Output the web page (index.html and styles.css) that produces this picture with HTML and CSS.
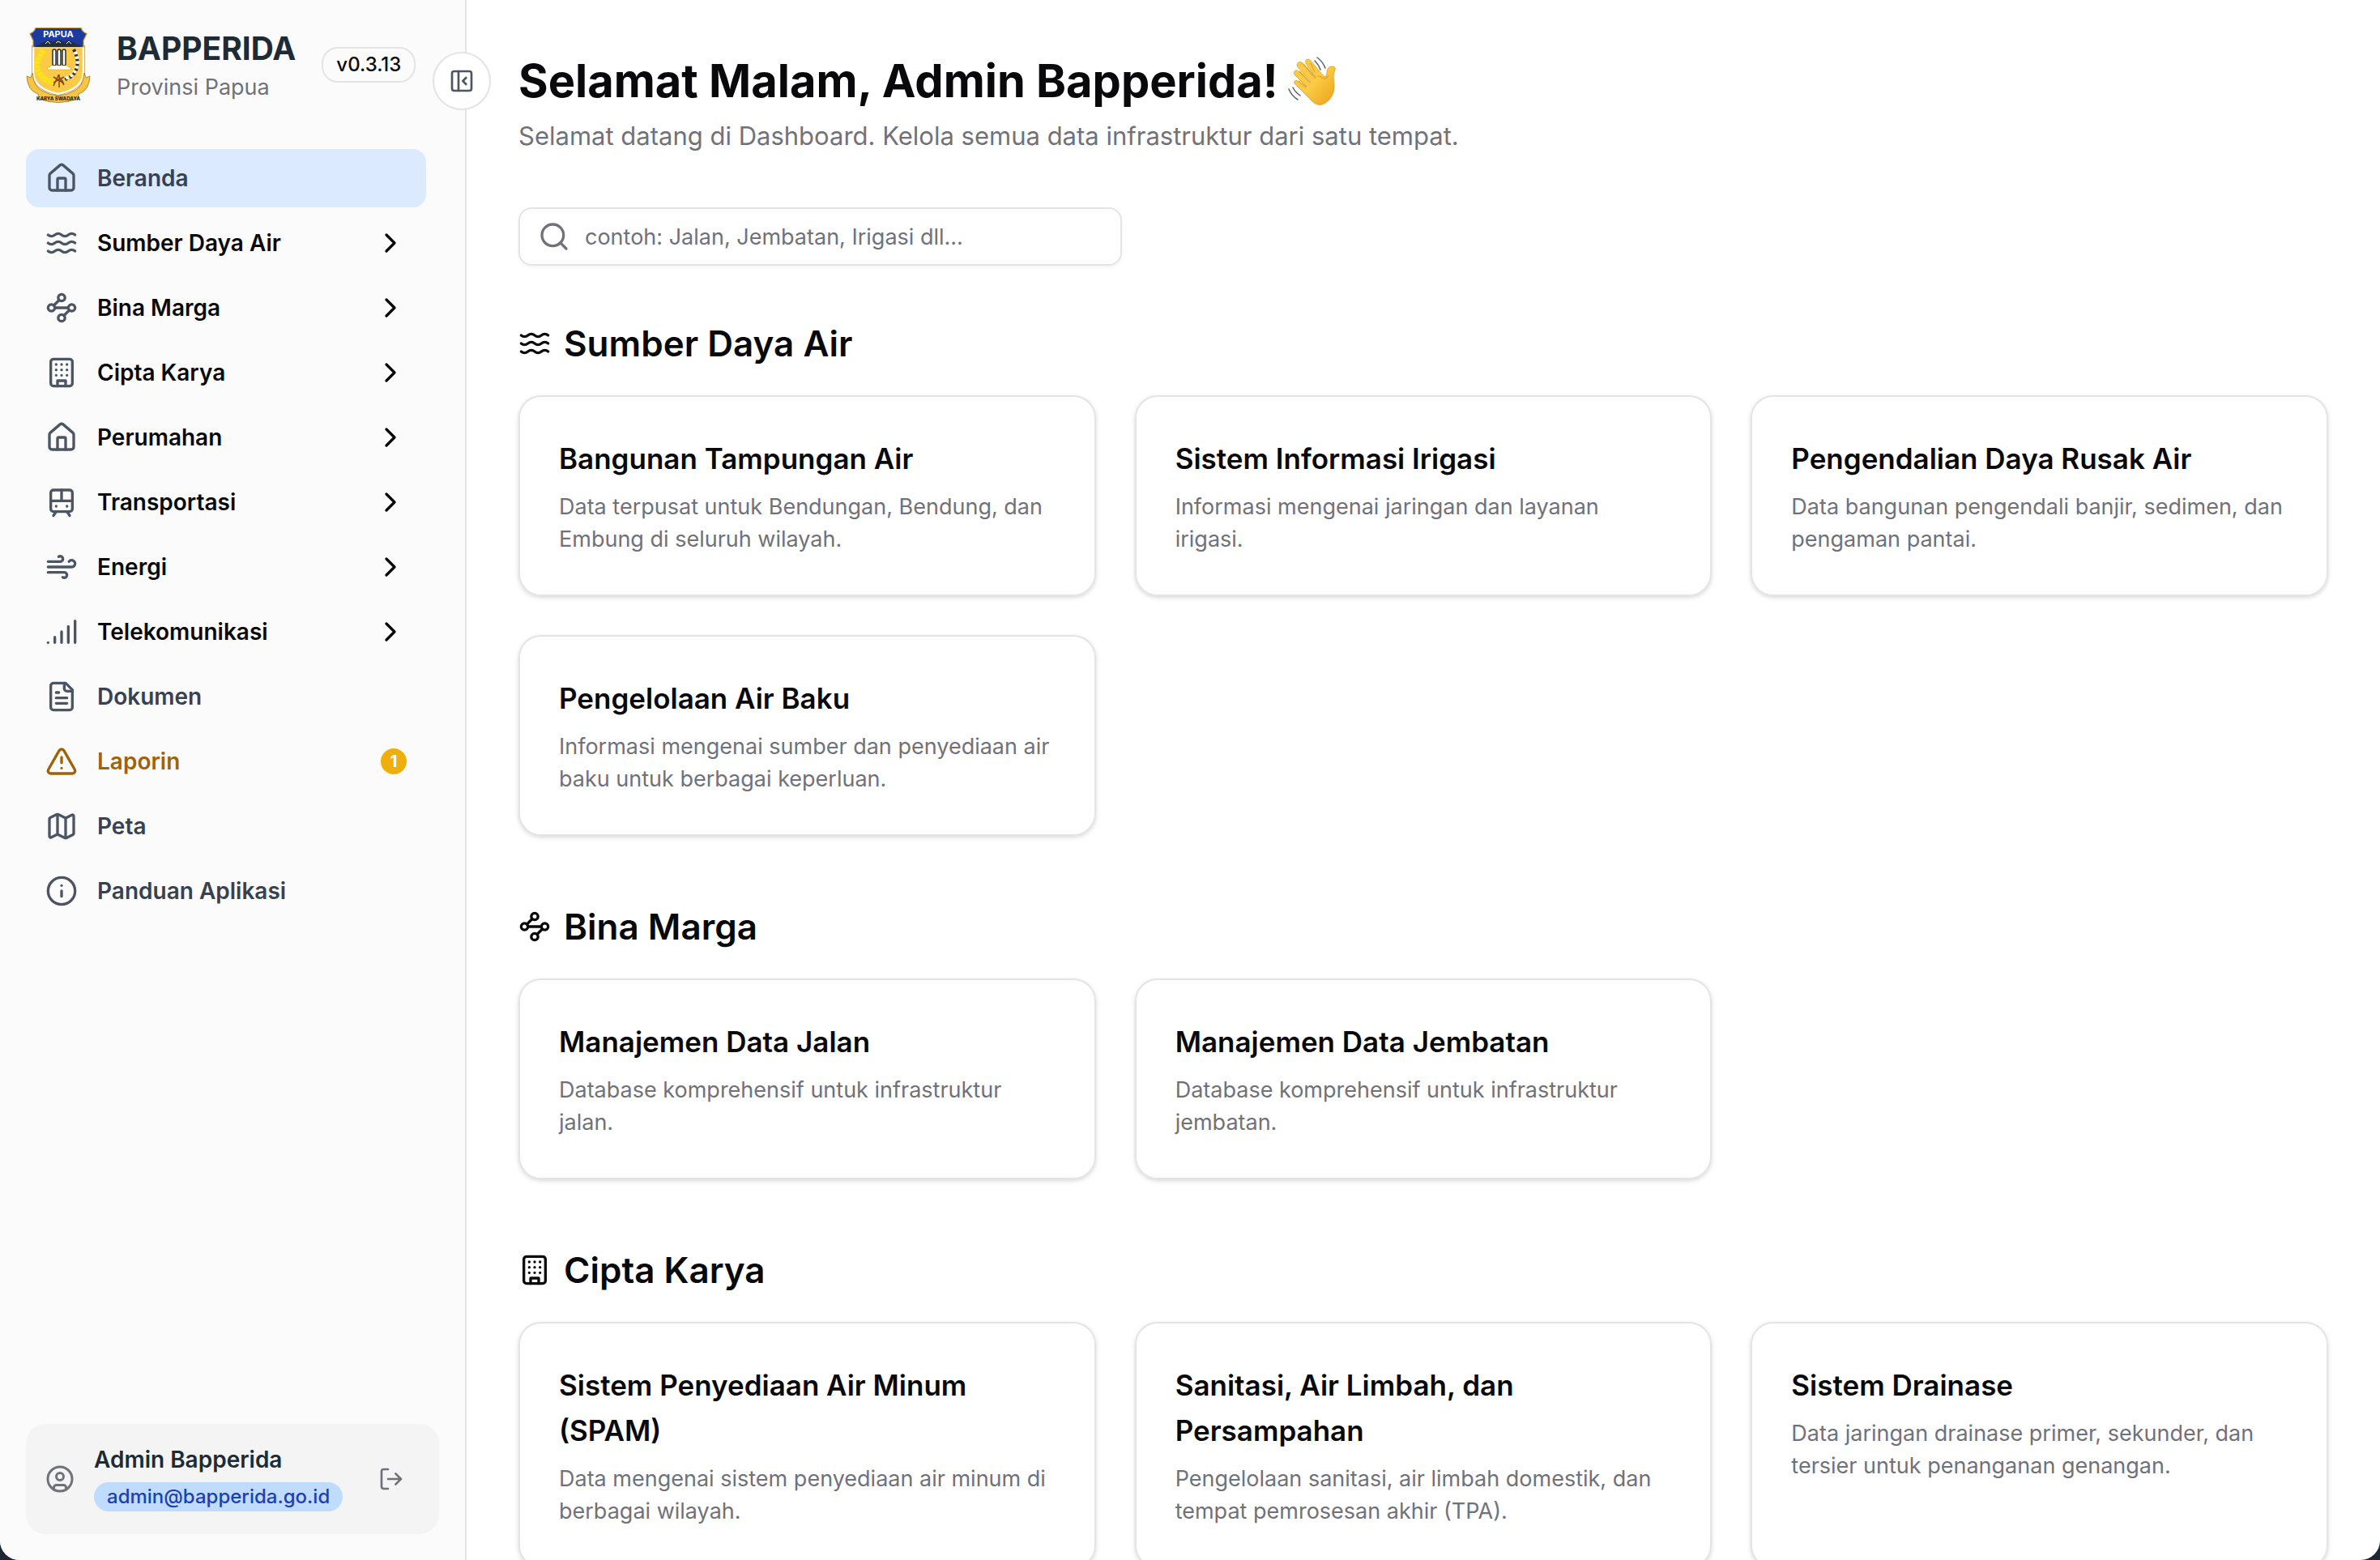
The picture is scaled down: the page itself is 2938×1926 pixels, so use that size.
FILE: index.html
```html
<!DOCTYPE html>
<html lang="id">
<head>
    <meta charset="UTF-8">
    <meta name="viewport" content="width=device-width, initial-scale=1.0">
    <title>Bapperida - Provinsi Papua</title>

    <link rel="stylesheet" href="styles.css">
</head>
<body>

    <!-- Icons -->
    <svg class="sprite" aria-hidden="true">
        <symbol id="house" viewBox="0 0 24 24"><path d="M15 21v-8a1 1 0 0 0-1-1h-4a1 1 0 0 0-1 1v8"/><path d="M3 10a2 2 0 0 1 .709-1.528l7-5.999a2 2 0 0 1 2.582 0l7 5.999A2 2 0 0 1 21 10v9a2 2 0 0 1-2 2H5a2 2 0 0 1-2-2z"/></symbol>
        <symbol id="waves" viewBox="0 0 24 24"><path d="M2 6c.6.5 1.2 1 2.5 1C7 7 7 5 9.5 5c2.6 0 2.4 2 5 2 2.5 0 2.5-2 5-2 1.3 0 1.9.5 2.5 1"/><path d="M2 12c.6.5 1.2 1 2.5 1 2.5 0 2.5-2 5-2 2.6 0 2.4 2 5 2 2.5 0 2.5-2 5-2 1.3 0 1.9.5 2.5 1"/><path d="M2 18c.6.5 1.2 1 2.5 1 2.5 0 2.5-2 5-2 2.6 0 2.4 2 5 2 2.5 0 2.5-2 5-2 1.3 0 1.9.5 2.5 1"/></symbol>
        <symbol id="waypoints" viewBox="0 0 24 24"><circle cx="12" cy="4.5" r="2.5"/><path d="m10.2 6.3-3.9 3.9"/><circle cx="4.5" cy="12" r="2.5"/><path d="M7 12h10"/><circle cx="19.5" cy="12" r="2.5"/><path d="m13.8 17.7 3.9-3.9"/><circle cx="12" cy="19.5" r="2.5"/></symbol>
        <symbol id="building" viewBox="0 0 24 24"><rect width="16" height="20" x="4" y="2" rx="2"/><path d="M9 22v-4h6v4M8 6h.01M16 6h.01M12 6h.01M12 10h.01M12 14h.01M16 10h.01M16 14h.01M8 10h.01M8 14h.01"/></symbol>
        <symbol id="tram" viewBox="0 0 24 24"><rect width="16" height="16" x="4" y="3" rx="2"/><path d="M4 11h16M12 3v8M8 19l-2 3M18 22l-2-3M8 15h.01M16 15h.01"/></symbol>
        <symbol id="wind" viewBox="0 0 24 24"><path d="M12.8 19.6A2 2 0 1 0 14 16H2"/><path d="M17.5 8a2.5 2.5 0 1 1 2 4H2"/><path d="M9.8 4.4A2 2 0 1 1 11 8H2"/></symbol>
        <symbol id="signal" viewBox="0 0 24 24"><path d="M2 20h.01M7 20v-4M12 20v-8M17 20V8M22 4v16"/></symbol>
        <symbol id="file" viewBox="0 0 24 24"><path d="M15 2H6a2 2 0 0 0-2 2v16a2 2 0 0 0 2 2h12a2 2 0 0 0 2-2V7Z"/><path d="M14 2v4a2 2 0 0 0 2 2h4M10 9H8M16 13H8M16 17H8"/></symbol>
        <symbol id="alert" viewBox="0 0 24 24"><path d="m21.73 18-8-14a2 2 0 0 0-3.48 0l-8 14A2 2 0 0 0 4 21h16a2 2 0 0 0 1.73-3"/><path d="M12 9v4M12 17h.01"/></symbol>
        <symbol id="map" viewBox="0 0 24 24"><path d="M14.106 5.553a2 2 0 0 0 1.788 0l3.659-1.83A1 1 0 0 1 21 4.619v12.764a1 1 0 0 1-.553.894l-4.553 2.277a2 2 0 0 1-1.788 0l-4.212-2.106a2 2 0 0 0-1.788 0l-3.659 1.83A1 1 0 0 1 3 19.381V6.618a1 1 0 0 1 .553-.894l4.553-2.277a2 2 0 0 1 1.788 0z"/><path d="M15 5.764v15M9 3.236v15"/></symbol>
        <symbol id="info" viewBox="0 0 24 24"><circle cx="12" cy="12" r="10"/><path d="M12 16v-4M12 8h.01"/></symbol>
        <symbol id="chevron" viewBox="0 0 24 24"><path d="m9 18 6-6-6-6"/></symbol>
        <symbol id="panel" viewBox="0 0 24 24"><rect width="18" height="18" x="3" y="3" rx="2"/><path d="M9 3v18M16 15l-3-3 3-3"/></symbol>
        <symbol id="user" viewBox="0 0 24 24"><circle cx="12" cy="12" r="10"/><circle cx="12" cy="10" r="3"/><path d="M7 20.662V19a2 2 0 0 1 2-2h6a2 2 0 0 1 2 2v1.662"/></symbol>
        <symbol id="logout" viewBox="0 0 24 24"><path d="m16 17 5-5-5-5M21 12H9M9 21H5a2 2 0 0 1-2-2V5a2 2 0 0 1 2-2h4"/></symbol>
        <symbol id="search" viewBox="0 0 24 24"><circle cx="11" cy="11" r="8"/><path d="m21 21-4.3-4.3"/></symbol>
    </svg>

    <div class="app">

        <!-- Sidebar -->
        <aside class="sidebar">
            <div class="brand">
                <svg class="logo" viewBox="0 0 80 96" role="img" aria-label="Logo Provinsi Papua">
                    <path d="M9 26V58Q10 78 40 84 70 78 71 58V26z" fill="#fcca46" stroke="#c9962b" stroke-width="4"/>
                    <path d="M9 26V58Q10 78 40 84 70 78 71 58V26z" fill="#fcca46" stroke="#fff" stroke-width="2.500"/>
                    <path d="M1 62 6 64 8 58Q10 76 20 80 40 92 60 80 70 76 72 58L74 64 79 62Q78 80 65 84L64 90Q40 99 16 90L15 84Q2 80 1 62z" fill="#f8c540" stroke="#9a7420" stroke-width=".8"/>
                    <path d="M12 2.500H68Q70 8 75 9.500 72 16 71 18V26H9V18Q8 16 5 9.500 10 8 12 2.500z" fill="#1d3a9e" stroke="#c9962b" stroke-width="1.200"/>
                    <path d="M10 26 22 20 27 18 33 20 40 17 47 20 53 18 58 20 70 26z" fill="#22303c"/>
                    <path d="m24 22 3-3 3 3m7-1 3-2 3 2m7 1 3-3 3 3" fill="none" stroke="#fff" stroke-width="1"/>
                    <text class="logo-name" x="40" y="14">PAPUA</text>
                    <path d="M22 30Q8 48 18 60q6 9 16 9" fill="none" stroke="#f7e516" stroke-width="7" stroke-dasharray="4 1"/>
                    <g stroke="#22303c" stroke-width="1.500" fill="#fff"><rect x="33" y="29" width="4" height="20" rx="2"/><rect x="39" y="29" width="4" height="20" rx="2"/><rect x="45" y="29" width="4" height="20" rx="2"/></g>
                    <path d="M30 49h22v2h3v3H27v-3h3z" fill="#fff" stroke="#c9962b" stroke-width=".5"/>
                    <path d="M59 29q10 20-2 33l-12 6" fill="none" stroke="#22303c" stroke-width="4" stroke-dasharray="3 3"/>
                    <path d="M61 32q7 18-5 29l-9 5" fill="none" stroke="#fff" stroke-width="4" stroke-dasharray="3 3"/>
                    <path d="m34 74 6-13 7 12m-6-13v16m-7-13 13 8m0-8-13 7" fill="none" stroke="#8a4a16" stroke-width="1.500"/>
                    <text class="logo-motto" x="40" y="92">KARYA SWADAYA</text>
                </svg>
                <div class="brand-text">
                    <div class="brand-name">BAPPERIDA</div>
                    <div class="brand-sub">Provinsi Papua</div>
                </div>
                <span class="version">v0.3.13</span>
            </div>
            <button class="toggle" aria-label="Tutup sidebar"><svg class="icon icon-sm"><use href="#panel"/></svg></button>

            <nav class="menu">
                <a class="menu-item active" href="#"><svg class="icon"><use href="#house"/></svg>Beranda</a>
                <button class="menu-item"><svg class="icon"><use href="#waves"/></svg>Sumber Daya Air<svg class="icon chevron"><use href="#chevron"/></svg></button>
                <button class="menu-item"><svg class="icon"><use href="#waypoints"/></svg>Bina Marga<svg class="icon chevron"><use href="#chevron"/></svg></button>
                <button class="menu-item"><svg class="icon"><use href="#building"/></svg>Cipta Karya<svg class="icon chevron"><use href="#chevron"/></svg></button>
                <button class="menu-item"><svg class="icon"><use href="#house"/></svg>Perumahan<svg class="icon chevron"><use href="#chevron"/></svg></button>
                <button class="menu-item"><svg class="icon"><use href="#tram"/></svg>Transportasi<svg class="icon chevron"><use href="#chevron"/></svg></button>
                <button class="menu-item"><svg class="icon"><use href="#wind"/></svg>Energi<svg class="icon chevron"><use href="#chevron"/></svg></button>
                <button class="menu-item"><svg class="icon"><use href="#signal"/></svg>Telekomunikasi<svg class="icon chevron"><use href="#chevron"/></svg></button>
                <a class="menu-item" href="#"><svg class="icon"><use href="#file"/></svg>Dokumen</a>
                <a class="menu-item warning" href="#"><svg class="icon"><use href="#alert"/></svg>Laporin<span class="count">1</span></a>
                <a class="menu-item" href="#"><svg class="icon"><use href="#map"/></svg>Peta</a>
                <a class="menu-item" href="#"><svg class="icon"><use href="#info"/></svg>Panduan Aplikasi</a>
            </nav>

            <div class="user">
                <svg class="icon icon-md"><use href="#user"/></svg>
                <div class="user-text">
                    <div class="user-name">Admin Bapperida</div>
                    <span class="user-email">admin@bapperida.go.id</span>
                </div>
                <button class="logout" aria-label="Keluar"><svg class="icon icon-sm"><use href="#logout"/></svg></button>
            </div>
        </aside>

        <!-- Content -->
        <main class="content">
            <header>
                <h1>Selamat Malam, Admin Bapperida!
                    <svg class="wave" viewBox="0 0 60 60" role="img" aria-label="Lambaian tangan">
                        <defs>
                            <linearGradient id="skin" x1="0" y1="0" x2="1" y2="1">
                                <stop offset="0.500" stop-color="#fccb45"/>
                                <stop offset="1" stop-color="#e9a015"/>
                            </linearGradient>
                        </defs>
                        <path d="M9 34c-3-3 0-6 3-4l9 8 2-1L8 22c-2-4 2-7 5-4l14 14 1-1L12 13c-3-4 2-9 6-5l15 19 1-1L22 8c-2-4 3-7 6-3l15 18c3 3 5 1 5-3 0-5 2-8 6-8 5 0 5 3 3 7-2 6 0 10 0 17 0 7-2 13-7 18-7 7-14 7-20 1z" fill="url(#skin)" stroke="#dd9a1c" stroke-width=".8"/>
                        <path d="m22 37-9-7m14 2L14 18m20 8L19 9m14 10L28 8m9 17c-1-2 3-1 5 1 3 2 6 1 7-2" fill="none" stroke="#e0a021" stroke-width="1.200"/>
                        <path d="M1 40q4 9 11 13M6 38q3 6 9 10M36 1q7 5 10 13M33 5q5 5 7 11" fill="none" stroke="#59606b" stroke-width="1.500" stroke-linecap="round"/>
                    </svg>
                </h1>
                <p class="lead">Selamat datang di Dashboard. Kelola semua data infrastruktur dari satu tempat.</p>
            </header>

            <div class="search">
                <svg class="icon"><use href="#search"/></svg>
                <input type="text" aria-label="Cari data" placeholder="contoh: Jalan, Jembatan, Irigasi dll...">
            </div>

            <section>
                <h2><svg class="icon"><use href="#waves"/></svg>Sumber Daya Air</h2>
                <div class="cards">
                    <a class="card" href="#">
                        <h3>Bangunan Tampungan Air</h3>
                        <p>Data terpusat untuk Bendungan, Bendung, dan Embung di seluruh wilayah.</p>
                    </a>
                    <a class="card" href="#">
                        <h3>Sistem Informasi Irigasi</h3>
                        <p>Informasi mengenai jaringan dan layanan irigasi.</p>
                    </a>
                    <a class="card" href="#">
                        <h3>Pengendalian Daya Rusak Air</h3>
                        <p>Data bangunan pengendali banjir, sedimen, dan pengaman pantai.</p>
                    </a>
                    <a class="card" href="#">
                        <h3>Pengelolaan Air Baku</h3>
                        <p>Informasi mengenai sumber dan penyediaan air baku untuk berbagai keperluan.</p>
                    </a>
                </div>
            </section>

            <section>
                <h2><svg class="icon"><use href="#waypoints"/></svg>Bina Marga</h2>
                <div class="cards">
                    <a class="card" href="#">
                        <h3>Manajemen Data Jalan</h3>
                        <p>Database komprehensif untuk infrastruktur jalan.</p>
                    </a>
                    <a class="card" href="#">
                        <h3>Manajemen Data Jembatan</h3>
                        <p>Database komprehensif untuk infrastruktur jembatan.</p>
                    </a>
                </div>
            </section>

            <section>
                <h2><svg class="icon"><use href="#building"/></svg>Cipta Karya</h2>
                <div class="cards">
                    <a class="card" href="#">
                        <h3>Sistem Penyediaan Air Minum (SPAM)</h3>
                        <p>Data mengenai sistem penyediaan air minum di berbagai wilayah.</p>
                    </a>
                    <a class="card" href="#">
                        <h3>Sanitasi, Air Limbah, dan Persampahan</h3>
                        <p>Pengelolaan sanitasi, air limbah domestik, dan tempat pemrosesan akhir (TPA).</p>
                    </a>
                    <a class="card" href="#">
                        <h3>Sistem Drainase</h3>
                        <p>Data jaringan drainase primer, sekunder, dan tersier untuk penanganan genangan.</p>
                    </a>
                </div>
            </section>
        </main>
    </div>

</body>
</html>
```
FILE: styles.css
```css
* {
    box-sizing: border-box;
    margin: 0;
    padding: 0;
}

body {
    font-family: Inter, "Liberation Sans", sans-serif;
    font-size: 28px;
    line-height: 40px;
    color: #09090b;
    background: #1c2733;
}

a {
    color: inherit;
    text-decoration: none;
}

button {
    font: inherit;
    color: inherit;
    background: none;
    border: none;
    cursor: pointer;
}

.sprite {
    display: none;
}

.icon {
    width: 40px;
    height: 40px;
    flex-shrink: 0;
    fill: none;
    stroke: currentColor;
    stroke-width: 2;
    stroke-linecap: round;
    stroke-linejoin: round;
}

.icon-md {
    width: 36px;
    height: 36px;
}

.icon-sm {
    width: 32px;
    height: 32px;
}

.app {
    display: flex;
    height: 100vh;
    overflow: hidden;
    background: white;
    border-radius: 0 0 24px 24px;
}

/* Sidebar */
.sidebar {
    position: relative;
    display: flex;
    flex-direction: column;
    flex-shrink: 0;
    width: 576px;
    padding: 32px;
    background: #fbfbfc;
    border-right: 2px solid #e4e4e7;
}

.brand {
    display: flex;
    align-items: center;
    gap: 32px;
    margin-bottom: 56px;
}

.logo {
    width: 80px;
    height: 96px;
}

.logo-name {
    font-size: 11px;
    line-height: 12px;
    font-weight: 700;
    fill: white;
    text-anchor: middle;
}

.logo-motto {
    font-size: 6px;
    line-height: 8px;
    font-weight: 800;
    fill: #22303c;
    text-anchor: middle;
}

.brand-name {
    font-size: 39px;
    line-height: 56px;
    font-weight: 700;
    color: #1c2b36;
}

.brand-sub {
    font-size: 27px;
    color: #71717a;
}

.version {
    padding: 4px 16px;
    font-size: 24px;
    line-height: 32px;
    font-weight: 500;
    border: 2px solid #e4e4e7;
    border-radius: 20px;
}

.toggle {
    position: absolute;
    top: 64px;
    right: -32px;
    display: flex;
    align-items: center;
    justify-content: center;
    width: 72px;
    height: 72px;
    color: #4b5563;
    background: white;
    border: 2px solid #e4e4e7;
    border-radius: 50%;
}

.menu {
    display: flex;
    flex-direction: column;
    gap: 8px;
    flex: 1;
    padding-right: 16px;
}

.menu-item {
    display: flex;
    align-items: center;
    gap: 24px;
    padding: 16px 24px;
    font-weight: 600;
    text-align: left;
    border-radius: 16px;
}

.menu-item .icon {
    color: #4b5563;
}

a.menu-item {
    color: #374151;
}

.menu-item.active {
    background: #dbeafe;
}

a.menu-item.warning,
.warning .icon {
    color: #a16207;
}

.menu-item .chevron {
    margin-left: auto;
    color: #09090b;
}

.count {
    width: 32px;
    margin-left: auto;
    font-size: 20px;
    line-height: 32px;
    font-weight: 700;
    text-align: center;
    color: white;
    background: #eeaf0b;
    border-radius: 50%;
}

.user {
    display: flex;
    align-items: center;
    gap: 24px;
    padding: 24px;
    color: #71717a;
    background: #f4f4f5;
    border-radius: 24px;
}

.user-text {
    display: flex;
    flex-direction: column;
    align-items: flex-start;
    gap: 8px;
    padding-bottom: 4px;
}

.user-name {
    font-weight: 600;
    color: #1c2b36;
}

.user-email {
    padding: 2px 16px;
    font-size: 24px;
    line-height: 32px;
    font-weight: 500;
    color: #1e40af;
    background: #bfdbfe;
    border-radius: 18px;
}

.logout {
    display: flex;
    justify-content: center;
    width: 72px;
    margin-left: auto;
}

/* Content */
.content {
    flex: 1;
    padding: 64px;
    overflow-y: auto;
    scrollbar-width: none;
}

h1 {
    display: flex;
    align-items: center;
    gap: 12px;
    font-size: 56px;
    line-height: 72px;
    font-weight: 700;
}

.wave {
    width: 60px;
    height: 60px;
}

.lead {
    margin-top: 8px;
    font-size: 31px;
    line-height: 48px;
    color: #71717a;
}

.search {
    display: flex;
    align-items: center;
    gap: 18px;
    width: calc(100% / 3);
    margin: 64px 0;
    padding: 0 22px;
    color: #71717a;
    border: 2px solid #e4e4e7;
    border-radius: 16px;
    box-shadow: 0 2px 4px rgba(0, 0, 0, 0.05);
}

.search input {
    flex: 1;
    height: 68px;
    font: inherit;
    font-size: 27px;
    color: #09090b;
    background: none;
    border: none;
    outline: none;
}

.search input::placeholder {
    color: #71717a;
}

section {
    margin-bottom: 80px;
}

h2 {
    display: flex;
    align-items: center;
    gap: 16px;
    margin-bottom: 32px;
    font-size: 44px;
    line-height: 64px;
    font-weight: 600;
}

.cards {
    display: grid;
    grid-template-columns: repeat(3, 1fr);
    gap: 48px;
}

.card {
    padding: 48px;
    border: 2px solid #e4e4e7;
    border-radius: 28px;
    box-shadow: 0 2px 6px rgba(0, 0, 0, 0.1), 0 2px 4px rgba(0, 0, 0, 0.06);
}

.card h3 {
    margin-bottom: 12px;
    font-size: 35px;
    line-height: 56px;
    font-weight: 600;
}

.card p {
    font-size: 27px;
    color: #71717a;
}
```
